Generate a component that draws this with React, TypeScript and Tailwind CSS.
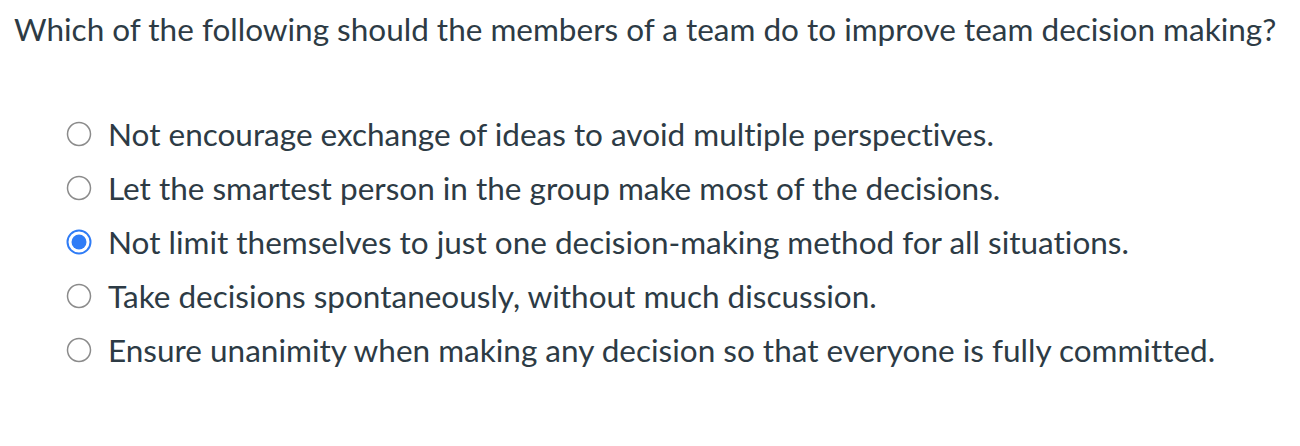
const options = [
  "Not encourage exchange of ideas to avoid multiple perspectives.",
  "Let the smartest person in the group make most of the decisions.",
  "Not limit themselves to just one decision-making method for all situations.",
  "Take decisions spontaneously, without much discussion.",
  "Ensure unanimity when making any decision so that everyone is fully committed.",
]

function Radio({ checked }: { checked: boolean }) {
  return (
    <svg width="26" height="26" viewBox="0 0 26 26" className="shrink-0">
      {checked ? (
        <>
          <circle cx="13" cy="13" r="11.5" fill="white" stroke="#2f7cf6" strokeWidth="2" />
          <circle cx="13" cy="13" r="7.5" fill="#2f7cf6" />
        </>
      ) : (
        <circle cx="13" cy="13" r="11.5" fill="white" stroke="#8b8b8b" strokeWidth="1.5" />
      )}
    </svg>
  )
}

export default function App() {
  const selected = 2
  return (
    <div className="w-[1300px] h-[446px] bg-white text-[#2d3b45] font-['Lato',sans-serif] [font-variant-ligatures:none]">
      <div className="pl-[14px] pt-[10px] text-[31.5px] leading-[38px]">
        Which of the following should the members of a team do to improve team decision making?
      </div>
      <div className="mt-[69px] pl-[66px] flex flex-col gap-[20px]">
        {options.map((opt, i) => (
          <label key={i} className="flex items-center gap-[16px] h-[34px]">
            <Radio checked={i === selected} />
            <span className="text-[31.5px] leading-[34px]">{opt}</span>
          </label>
        ))}
      </div>
    </div>
  )
}
